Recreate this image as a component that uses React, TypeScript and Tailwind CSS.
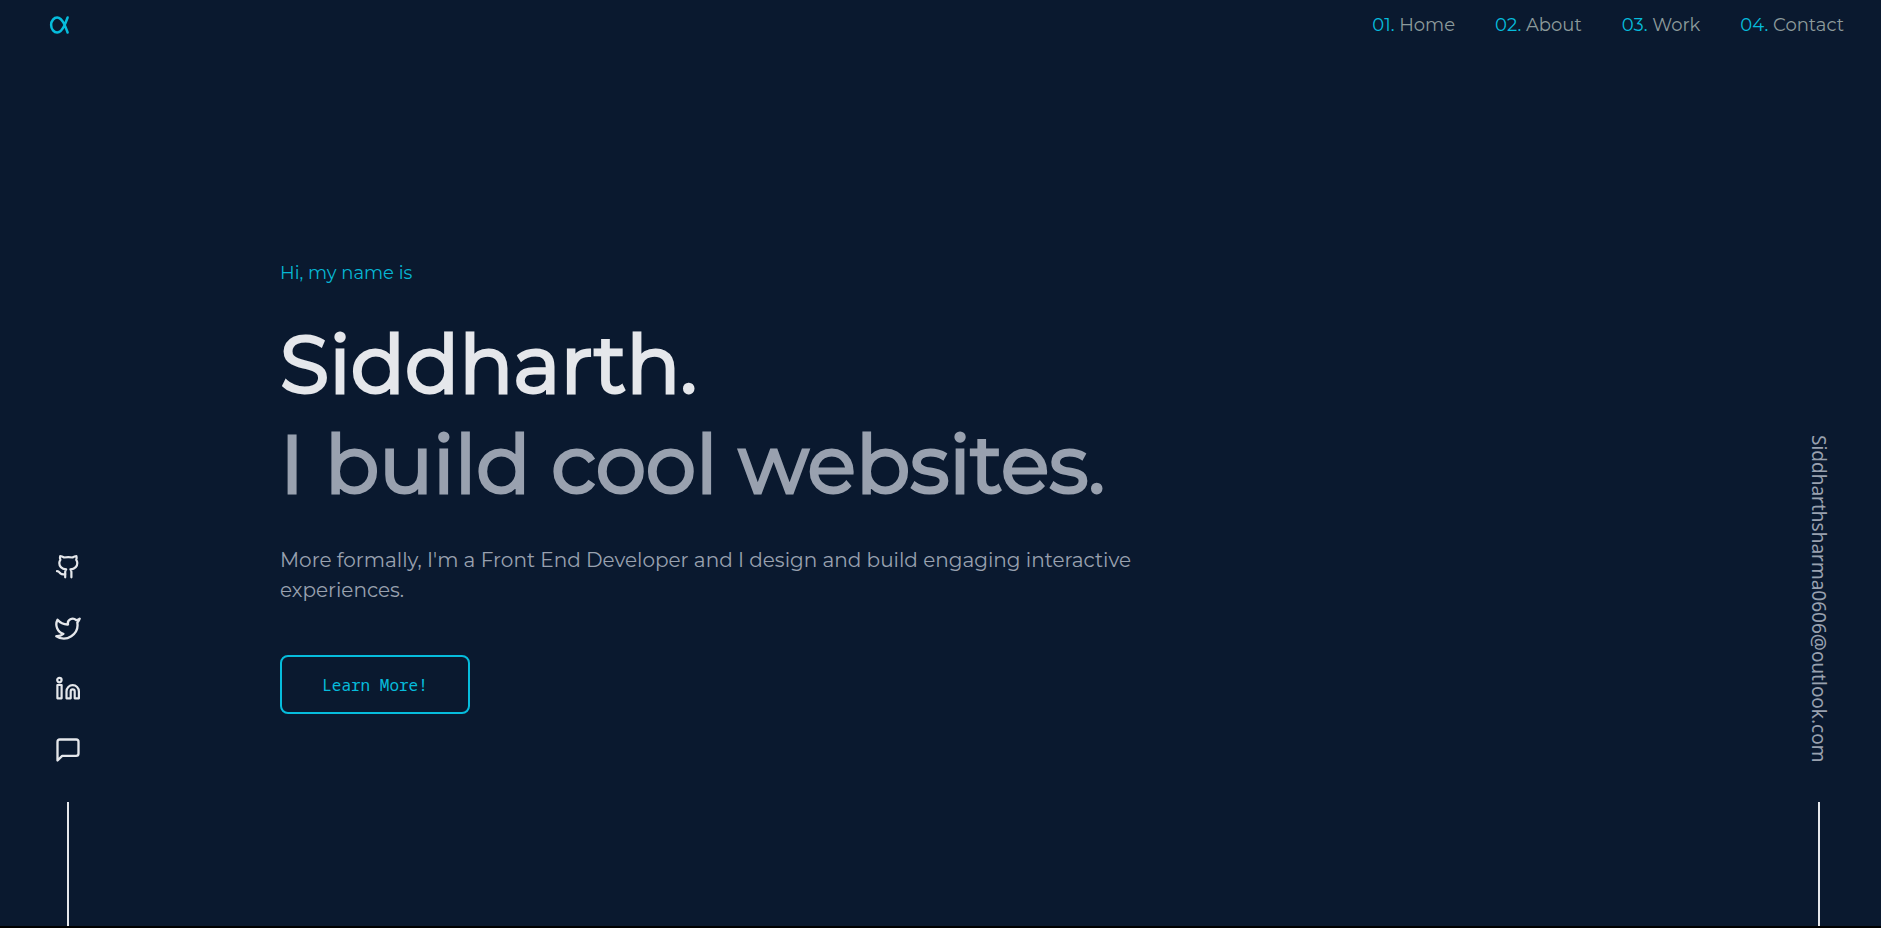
import React from "react";
import { Twitter } from "lucide-react";
import { FiMessageSquare } from "react-icons/fi";
import { TbAlpha } from "react-icons/tb";

const links = [
  { number: "01.", label: "Home", href: "#home" },
  { number: "02.", label: "About", href: "#about" },
  { number: "03.", label: "Work", href: "#work" },
  { number: "04.", label: "Contact", href: "#contact" },
];

function GithubIcon() {
  return (
    <svg
      width="28"
      height="28"
      viewBox="0 -1 28 28"
      fill="none"
      stroke="currentColor"
      strokeWidth="2.2"
      strokeLinecap="round"
      strokeLinejoin="round"
    >
      <path d="M11.2 23.3v-5.2c0-1.2.3-2 1-2.8-3.9-.4-6.9-2.2-6.9-6.3 0-1.2.4-2.2 1.1-3.1-.5-1.2-.6-2.6-.2-3.8 1.6 0 2.7.6 3.9 1.4 2.8-.5 5.600-.5 8.400 0 1.200-.8 2.300-1.400 3.900-1.400.4 1.200.3 2.600-.2 3.800.7.9 1.100 1.900 1.100 3.100 0 4.100-3 5.900-6.900 6.300.7.8 1 1.600 1 2.800v5.200" />
      <path d="M3 17.2c2 .1 2.4 1.2 3.4 2.2 1.3 1.1 3.1 1.3 4.8.7" />
    </svg>
  );
}

function LinkedinIcon() {
  return (
    <svg
      width="28"
      height="28"
      viewBox="0 -1 28 28"
      fill="none"
      stroke="currentColor"
      strokeWidth="2.2"
      strokeLinejoin="round"
    >
      <circle cx="5.4" cy="4.1" r="2.2" />
      <path d="M3.4 9h4.2v13.3H3.4z" />
      <path d="M12.5 22.3v-6.9a6.2 6.2 0 0 1 12.4 0v6.9h-4.2v-6.9a2 2 0 0 0-4 0v6.9z" />
    </svg>
  );
}

const socials = [
  { label: "GitHub", icon: <GithubIcon /> },
  { label: "Twitter", icon: <Twitter size={28} /> },
  { label: "LinkedIn", icon: <LinkedinIcon /> },
  { label: "Message", icon: <FiMessageSquare size={28} /> },
];

export default function App() {
  return (
    <div className="flex min-h-screen flex-col border-b-2 border-black bg-[#0a192f] font-['Montserrat','Inter',sans-serif] text-gray-200">
      <header className="flex h-[50px] items-center justify-between pr-[37px] pl-[45px]">
        <a href="#home" aria-label="Alpha" className="text-[#06bcdc]">
          <TbAlpha size={30} />
        </a>
        <nav>
          <ul className="flex gap-10 text-lg">
            {links.map((link) => (
              <li key={link.label}>
                <a href={link.href} className="text-[#8d9b9b]">
                  <span className="text-[#06bcdc]">{link.number}</span> {link.label}
                </a>
              </li>
            ))}
          </ul>
        </nav>
      </header>

      <div className="flex grow justify-between pr-12 pl-[54px]">
        <aside className="flex flex-col items-center justify-end gap-[38px]">
          <ul className="flex flex-col gap-[33px]">
            {socials.map((social) => (
              <li key={social.label}>
                <a href={"#" + social.label.toLowerCase()} aria-label={social.label} className="block">
                  {social.icon}
                </a>
              </li>
            ))}
          </ul>
          <div className="h-[124px] w-0.5 bg-gray-200" />
        </aside>

        <main className="ml-[198px] flex grow flex-col items-start pt-[209px]">
          <p className="text-lg text-[#06b6d4]">Hi, my name is</p>
          <h1 className="mt-7 text-[80px] leading-[100px] font-normal [-webkit-text-stroke:3px_currentColor]">
            <span className="block">Siddharth.</span>
            <span className="block text-gray-400">I build cool websites.</span>
          </h1>
          <p className="mt-[30px] max-w-[864px] text-xl leading-[30px] text-gray-400">
            More formally, I'm a Front End Developer and I design and build engaging interactive experiences.
          </p>
          <button
            type="button"
            className="mt-[50px] h-[59px] w-[190px] rounded-lg border-2 border-[#06bcdc] font-['Noto_Sans_Mono','DejaVu_Sans_Mono',monospace] text-base text-[#06bcdc]"
          >
            Learn More!
          </button>
        </main>

        <aside className="flex flex-col items-center justify-end gap-10">
          <a
            href="mailto:Siddharthsharma0606@outlook.com"
            className="font-['Noto_Sans',sans-serif] text-[19px] leading-7 text-gray-400 [writing-mode:vertical-rl]"
          >
            Siddharthsharma0606@outlook.com
          </a>
          <div className="h-[124px] w-0.5 bg-gray-200" />
        </aside>
      </div>
    </div>
  );
}
